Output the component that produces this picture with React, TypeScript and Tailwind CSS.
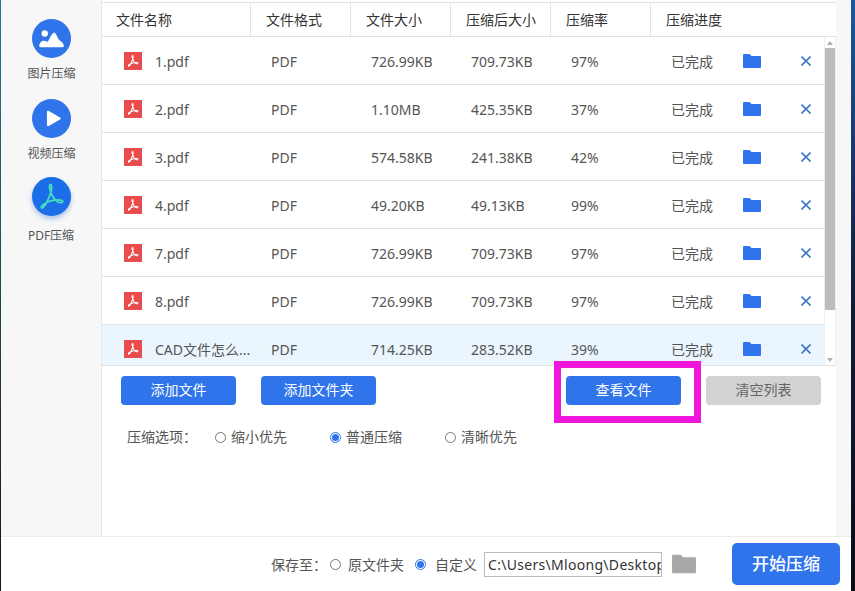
const rows = [
  { name: '1.pdf', size: '726.99KB', after: '709.73KB', rate: '97%' },
  { name: '2.pdf', size: '1.10MB', after: '425.35KB', rate: '37%' },
  { name: '3.pdf', size: '574.58KB', after: '241.38KB', rate: '42%' },
  { name: '4.pdf', size: '49.20KB', after: '49.13KB', rate: '99%' },
  { name: '7.pdf', size: '726.99KB', after: '709.73KB', rate: '97%' },
  { name: '8.pdf', size: '726.99KB', after: '709.73KB', rate: '97%' },
  { name: 'CAD文件怎么...', size: '714.25KB', after: '283.52KB', rate: '39%' },
]

const acrobat = 'M12 3.5c-1 0-1.2 1.4-.6 3.6.8 3 2.6 6.3 4.6 8 1.4 1.100 3.400 1.600 4.200.8.500-.6-.2-1.300-1.500-1.400-3.300-.3-8 .7-11.200 2.600-1.500.9-2.700 2.200-2.100 2.800.7.600 1.900-.6 2.900-2.200 1.800-2.900 3.600-7.300 4.200-10.500.3-1.800 0-3.700-.5-3.700z'

function PdfGlyph({ color, width = 1.7 }: { color: string; width?: number }) {
  return (
    <svg viewBox="3.500 2.500 18 19" className="h-full w-full" fill="none" stroke={color} strokeWidth={width}>
      <path d={acrobat} />
    </svg>
  )
}

function FolderIcon({ className }: { className: string }) {
  return (
    <svg viewBox="0 0 18 14" className={className}>
      <path d="M0 1a1 1 0 0 1 1-1h5.500l2 2H17a1 1 0 0 1 1 1v10a1 1 0 0 1-1 1H1a1 1 0 0 1-1-1z" fill="currentColor" />
    </svg>
  )
}

function Radio({ checked }: { checked?: boolean }) {
  return (
    <span
      className={`flex h-[11px] w-[11px] items-center justify-center rounded-full border ${checked ? 'border-[#2f74ea]' : 'border-[#777]'}`}
    >
      {checked && <span className="h-[7px] w-[7px] rounded-full bg-[#2f74ea]" />}
    </span>
  )
}

function SideItem({ label, children, className }: { label: string; children: React.ReactNode; className: string }) {
  return (
    <div className={`flex flex-col items-center ${className}`}>
      {children}
      <span className="mt-[8px] text-xs leading-4 text-[#555]">{label}</span>
    </div>
  )
}

function Btn({ label, className }: { label: string; className?: string }) {
  return (
    <button className={`h-[29px] w-[115px] rounded pb-[2px] text-sm ${className ?? 'bg-[#2f74ea] text-white'}`}>
      {label}
    </button>
  )
}

export default function App() {
  return (
    <div
      className="relative flex h-[591px] w-[855px] overflow-hidden bg-white text-sm"
      style={{ fontFamily: '"Noto Sans", "Noto Sans CJK SC", sans-serif' }}
    >
      <div className="w-[1px] bg-gradient-to-b from-[#1d7f8c] to-[#14141f]" />

      <div className="flex w-[850px] flex-col">
        <div className="flex h-[536px]">
          {/* Sidebar */}
          <aside className="w-[100px] bg-[#f7f7f7] pt-[19px]">
            <SideItem label="图片压缩" className="pl-[1px]">
              <div className="flex h-[39px] w-[39px] items-center justify-center rounded-full bg-[#2f74ea]">
                <svg viewBox="0 0 28 22" className="h-[20px] w-[26px]" fill="white">
                  <circle cx="6" cy="5" r="3.500" />
                  <path d="M0 19c0-3 2-6 5-6 2 0 3 1 4 1 2-1 3-8 7-10 2-1 4 6 6 8 2 2 5 3 5 7 0 1-1 1-2 1H2c-1 0-2 0-2-1z" />
                </svg>
              </div>
            </SideItem>
            <SideItem label="视频压缩" className="mt-[17px] pl-[1px]">
              <div className="flex h-[39px] w-[39px] items-center justify-center rounded-full bg-[#2f74ea]">
                <svg viewBox="0 0 16 18" className="ml-[3px] h-[18px] w-[15px]" fill="white">
                  <path d="M1 1.500c0-1 1-1.500 2-1l12 7c.9.500.9 1.500 0 2l-12 7c-1 .5-2 0-2-1z" />
                </svg>
              </div>
            </SideItem>
            <SideItem label="PDF压缩" className="mt-[15px] [&>span]:mt-[12px]">
              <div className="flex h-[39px] w-[39px] items-center justify-center rounded-full bg-[#1b6ee8] p-[6px] shadow-[0_3px_5px_rgba(30,90,200,0.35)]">
                <PdfGlyph color="#45dcc0" width={1.3} />
              </div>
            </SideItem>
          </aside>

          {/* Main panel */}
          <main className="flex w-[735px] flex-col border-l border-[#e6e6e6] bg-white pt-[2px]">
            <div className="flex h-[35px] border-y border-[#e2e2e2] text-[#333]">
              <div className="flex w-[148px] items-center pl-[14px]">文件名称</div>
              <div className="flex w-[100px] items-center border-l border-[#e2e2e2] pl-[15px]">文件格式</div>
              <div className="flex w-[100px] items-center border-l border-[#e2e2e2] pl-[15px]">文件大小</div>
              <div className="flex w-[100px] items-center border-l border-[#e2e2e2] pl-[15px]">压缩后大小</div>
              <div className="flex w-[100px] items-center border-l border-[#e2e2e2] pl-[15px]">压缩率</div>
              <div className="flex flex-1 items-center border-l border-[#e2e2e2] pl-[15px]">压缩进度</div>
            </div>

            <div className="flex h-[329px] border-b border-[#e2e2e2]">
              <div className="w-[723px] overflow-hidden">
                {rows.map((row, i) => (
                  <div
                    key={row.name}
                    className={`flex h-[48px] shrink-0 items-center border-b border-[#e2e2e2] text-[#555] ${i === 6 ? 'bg-[#eaf5fd]' : ''}`}
                  >
                    <div className="ml-[22px] h-[18px] w-[18px] shrink-0 bg-[#e84c4c] p-[3px]">
                      <PdfGlyph color="white" />
                    </div>
                    <div className="ml-[13px] w-[96px] truncate pt-[2px]">{row.name}</div>
                    <div className="ml-[20px] w-[100px] pt-[2px]">PDF</div>
                    <div className="w-[100px] pt-[2px]">{row.size}</div>
                    <div className="w-[100px] pt-[2px]">{row.after}</div>
                    <div className="w-[100px] pt-[2px]">{row.rate}</div>
                    <div className="w-[72px] pt-[2px]">已完成</div>
                    <FolderIcon className="h-[14px] w-[18px] text-[#2f74ea]" />
                    <svg viewBox="0 0 10 10" className="ml-[40px] h-[10px] w-[10px]" stroke="#3d77c5" strokeWidth="1.600">
                      <path d="M0.500 0.500l9 9M9.500 0.500l-9 9" />
                    </svg>
                  </div>
                ))}
              </div>
              {/* Scrollbar */}
              <div className="flex w-[12px] flex-col items-center border-x border-[#eee] bg-white">
                <div className="flex h-[11px] items-center">
                  <div className="border-x-[3px] border-b-[4px] border-x-transparent border-b-[#b0b0b0]" />
                </div>
                <div className="h-[262px] w-full bg-[#bcbcbc]" />
                <div className="mt-auto flex h-[11px] items-center">
                  <div className="border-x-[3px] border-t-[4px] border-x-transparent border-t-[#b0b0b0]" />
                </div>
              </div>
            </div>

            <div className="mt-[10px] flex pl-[19px]">
              <Btn label="添加文件" />
              <Btn label="添加文件夹" className="ml-[25px] bg-[#2f74ea] text-white" />
              <Btn label="查看文件" className="ml-[190px] bg-[#2f74ea] text-white" />
              <Btn label="清空列表" className="ml-[25px] bg-[#d2d2d2] text-[#666]" />
            </div>

            <div className="mt-[22px] flex h-[20px] items-center pl-[25px] text-[#555]">
              <span className="w-[88px]">压缩选项：</span>
              <Radio />
              <span className="ml-[5px] w-[99px]">缩小优先</span>
              <Radio checked />
              <span className="ml-[5px] w-[99px]">普通压缩</span>
              <Radio />
              <span className="ml-[5px]">清晰优先</span>
            </div>
          </main>

          <div className="w-[15px] bg-[#f7f7f7]" />
        </div>

        {/* Footer */}
        <footer className="flex h-[55px] items-center border-t border-[#ececec] bg-white pl-[270px] text-[#555]">
          <span className="w-[59px] pt-[1px]">保存至：</span>
          <Radio />
          <span className="ml-[7px] w-[67px] pt-[1px]">原文件夹</span>
          <Radio checked />
          <span className="ml-[9px] w-[49px] pt-[1px]">自定义</span>
          <div className="flex h-[25px] w-[178px] items-center overflow-hidden border border-[#bbb] px-[3px] pt-[1px] tracking-[0.3px] whitespace-nowrap text-[#333]">
            C:\Users\Mloong\Desktop
          </div>
          <FolderIcon className="ml-[10px] h-[20px] w-[24px] text-[#a8a8a8]" />
          <button className="ml-[36px] h-[42px] w-[108px] rounded-[5px] bg-[#2f74ea] text-[17px] font-medium text-white">
            开始压缩
          </button>
        </footer>
      </div>

      <div className="flex-1 bg-gradient-to-b from-[#1c5a9c] via-[#101c3c] to-[#0c0c18]" />

      {/* Annotation box over the view button */}
      <div className="absolute top-[361px] left-[554px] h-[62px] w-[147px] border-[7px] border-[#f016dc]" />
    </div>
  )
}
